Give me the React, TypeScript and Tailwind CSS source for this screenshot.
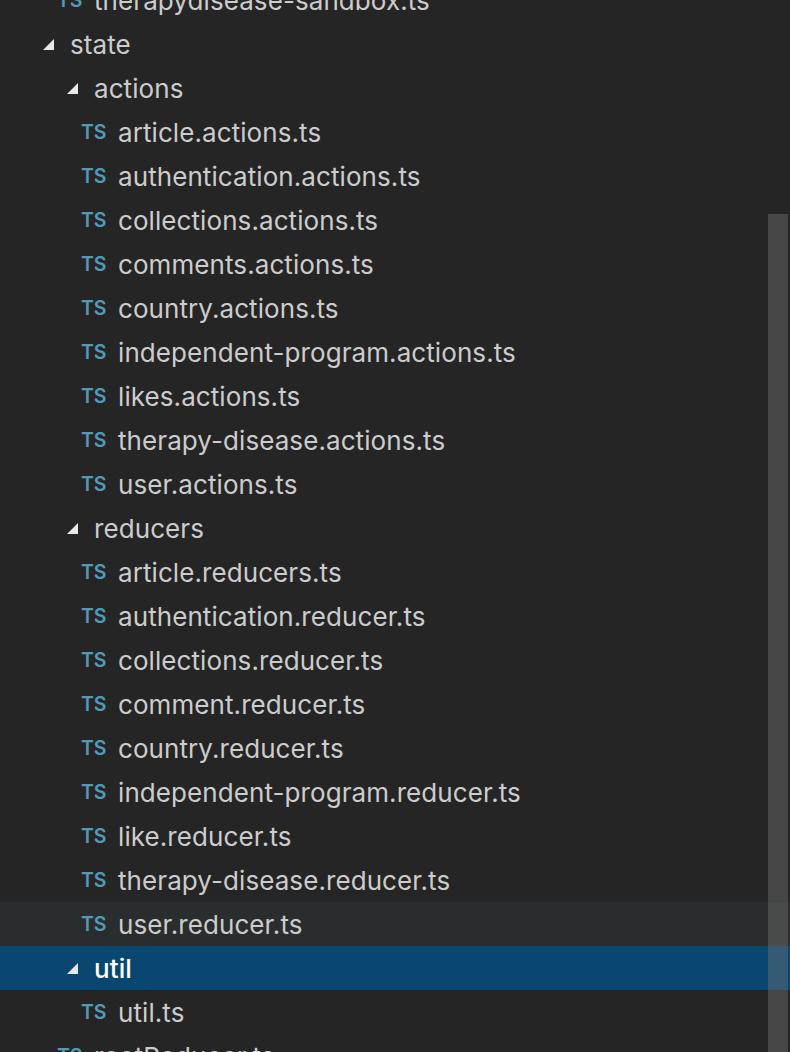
type Row = { name: string; depth: number; folder?: boolean; hover?: boolean; selected?: boolean }

const rows: Row[] = [
  { name: 'therapydisease-sandbox.ts', depth: 1 },
  { name: 'state', depth: 0, folder: true },
  { name: 'actions', depth: 1, folder: true },
  { name: 'article.actions.ts', depth: 2 },
  { name: 'authentication.actions.ts', depth: 2 },
  { name: 'collections.actions.ts', depth: 2 },
  { name: 'comments.actions.ts', depth: 2 },
  { name: 'country.actions.ts', depth: 2 },
  { name: 'independent-program.actions.ts', depth: 2 },
  { name: 'likes.actions.ts', depth: 2 },
  { name: 'therapy-disease.actions.ts', depth: 2 },
  { name: 'user.actions.ts', depth: 2 },
  { name: 'reducers', depth: 1, folder: true },
  { name: 'article.reducers.ts', depth: 2 },
  { name: 'authentication.reducer.ts', depth: 2 },
  { name: 'collections.reducer.ts', depth: 2 },
  { name: 'comment.reducer.ts', depth: 2 },
  { name: 'country.reducer.ts', depth: 2 },
  { name: 'independent-program.reducer.ts', depth: 2 },
  { name: 'like.reducer.ts', depth: 2 },
  { name: 'therapy-disease.reducer.ts', depth: 2 },
  { name: 'user.reducer.ts', depth: 2, hover: true },
  { name: 'util', depth: 1, folder: true, selected: true },
  { name: 'util.ts', depth: 2 },
  { name: 'rootReducer.ts', depth: 1 },
]

// depth is written out as classes so tailwind can see them
const folderPad = ['pl-[43px]', 'pl-[67px]', 'pl-[91px]']
const filePad = ['pl-[33px]', 'pl-[57px]', 'pl-[81px]']

function Twisty() {
  return (
    <svg width="11" height="11" viewBox="0 0 11 11" className="shrink-0">
      <path d="M11 0V11H0Z" fill="#e8e8e8" />
    </svg>
  )
}

function TreeRow({ row }: { row: Row }) {
  const bg = row.selected ? 'bg-[#094771]' : row.hover ? 'bg-[#2a2d2e]' : ''
  const color = row.selected ? 'text-white font-medium' : 'text-[#cccccc]'
  return (
    <div
      className={`flex items-center h-[44px] whitespace-nowrap ${bg} ${color} ${
        row.folder ? folderPad[row.depth] : filePad[row.depth]
      }`}
    >
      {row.folder ? (
        <>
          <Twisty />
          <span className="ml-[16px] text-[26px] tracking-[0.08px]">{row.name}</span>
        </>
      ) : (
        <>
          <span className="w-[37px] shrink-0 text-[19.5px] font-semibold text-[#519aba] translate-y-[1px]">TS</span>
          <span className="text-[26px] tracking-[0.08px]">{row.name}</span>
        </>
      )}
    </div>
  )
}

export default function App() {
  return (
    <div className="relative w-[790px] h-[1052px] overflow-hidden bg-[#252526] font-['Inter','Noto_Sans',sans-serif]">
      <div className="-mt-[22px]">
        {rows.map((r) => (
          <TreeRow key={r.name} row={r} />
        ))}
      </div>
      {/* overlay scrollbar */}
      <div className="absolute left-[768px] top-[214px] bottom-0 w-[20px] bg-[rgba(121,121,121,0.4)]" />
    </div>
  )
}
